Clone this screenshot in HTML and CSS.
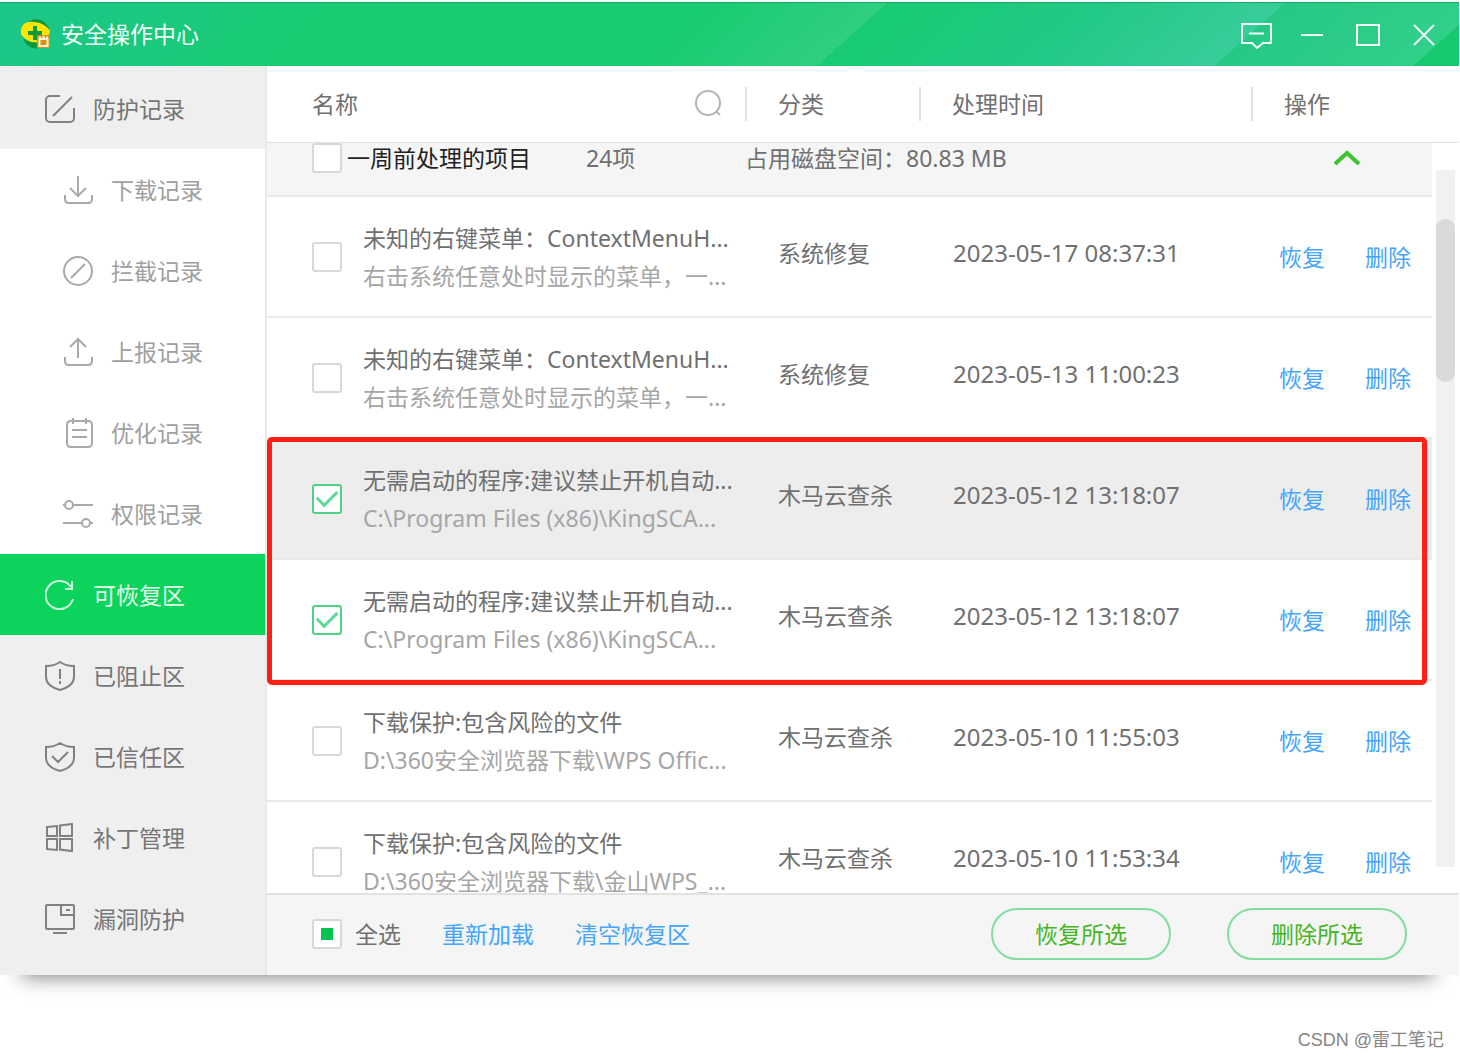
FILE: index.html
```html
<!DOCTYPE html>
<html lang="zh-CN">
<head>
<meta charset="utf-8">
<title>安全操作中心</title>
<link rel="stylesheet" href="styles.css">
</head>
<body>
<div class="window">
  <header class="titlebar">
    <svg class="logo" viewBox="0 0 30 30" aria-hidden="true">
      <path d="M7 4C14-3 26 0 29 10l-4 4C22 6 14 3 7 4z" fill="#0a9a3c"/>
      <path d="M1 15C0 6 6 2 13 3c8 0 14 4 17 9l-2 7-8 6C12 24 3 20 1 15z" fill="#ffe600"/>
      <path d="M3 19c4 4 9 5 17 4v6C12 31 5 26 3 19z" fill="#0a9a3c"/>
      <path d="M15 7v14M8 14h14" stroke="#0a9a3c" stroke-width="4"/>
      <path d="M17 16h13v13H17z" fill="#d9920f"/>
      <path d="M19.500 20h8v7h-8zM20 17.500v3M23.500 17v3M27 17.500v3" fill="none" stroke="#fff6dc" stroke-width="2"/>
    </svg>
    <h1 class="title">安全操作中心</h1>
    <div class="controls">
      <button type="button" aria-label="反馈"><svg class="icon" viewBox="0 0 32 32"><path d="M2 6h29v19h-8l-6 5-5-5H2zM9 15.500h15"/></svg></button>
      <button type="button" aria-label="最小化"><svg class="icon" viewBox="0 0 32 32"><path d="M5 17h22"/></svg></button>
      <button type="button" aria-label="最大化"><svg class="icon" viewBox="0 0 32 32"><path d="M5 7h22v20H5z"/></svg></button>
      <button type="button" aria-label="关闭"><svg class="icon" viewBox="0 0 32 32"><path d="M6 7l20 20M26 7l-20 20"/></svg></button>
    </div>
  </header>
  <div class="content">
    <nav class="sidebar">
      <a class="item" href="#protect"><svg class="icon" viewBox="0 0 30 30"><path d="M15 2H5a4 4 0 0 0-4 4v18a4 4 0 0 0 4 4h20a4 4 0 0 0 4-4V14M8 22L27 3"/></svg>防护记录</a>
      <div class="sub">
        <a class="item" href="#download"><svg class="icon" viewBox="0 0 30 30"><path d="M2 20v4q0 4 4 4h19q4 0 4-4v-4M15 1v20M7 13l8 8 8-8"/></svg>下载记录</a>
        <a class="item" href="#block"><svg class="icon" viewBox="0 0 30 30"><circle cx="15" cy="15" r="14"/><path d="M8 22L22 8"/></svg>拦截记录</a>
        <a class="item" href="#report"><svg class="icon" viewBox="0 0 30 30"><path d="M2 20v4q0 4 4 4h19q4 0 4-4v-4M15 21V2M7 10l8-8 8 8"/></svg>上报记录</a>
        <a class="item" href="#optimize"><svg class="icon" viewBox="0 0 30 30"><path d="M8 3h17q4 0 4 4v18q0 4-4 4H8q-4 0-4-4V7q0-4 4-4M10 0v6M23 0v6M9 12h15M9 19h15"/></svg>优化记录</a>
        <a class="item" href="#permission"><svg class="icon" viewBox="0 0 30 30"><circle cx="6" cy="6" r="4"/><circle cx="23" cy="24" r="4"/><path d="M10 6h20M0 6h2M0 24h19M27 24h3"/></svg>权限记录</a>
      </div>
      <a class="item active" href="#restore" aria-current="page"><svg class="icon" viewBox="0 0 30 30"><path d="M28 19A14 14 0 1 1 26 7M27 1v8h-7"/></svg>可恢复区</a>
      <a class="item" href="#blocked"><svg class="icon" viewBox="0 0 30 30"><path d="M15 1q6 4 14 4v11c0 7-7 11-14 13C8 27 1 23 1 16V5q8 0 14-4zM15 8v10M15 20v3"/></svg>已阻止区</a>
      <a class="item" href="#trusted"><svg class="icon" viewBox="0 0 30 30"><path d="M15 1q6 4 14 4v11c0 7-7 11-14 13C8 27 1 23 1 16V5q8 0 14-4zM7 14l6 6 10-10"/></svg>已信任区</a>
      <a class="item" href="#patch"><svg class="icon" viewBox="0 0 30 30"><path d="M2 4l10-1v10H2zM15 2.500L27 1v12H15zM2 16h10v11L2 26zM15 16h12v12l-12-1.500z"/></svg>补丁管理</a>
      <a class="item" href="#leak"><svg class="icon" viewBox="0 0 30 30"><path d="M2 1h26q1 0 1 1v22q0 1-1 1H2q-1 0-1-1V2q0-1 1-1zM16 1v10h13M21 6h4M8 29h14"/></svg>漏洞防护</a>
    </nav>
    <main class="main">
      <div class="list">
        <table class="records">
          <colgroup><col><col class="col-type"><col class="col-time"><col class="col-ops"><col class="col-gutter"></colgroup>
          <thead>
            <tr>
              <th scope="col"><div class="head name-head">名称<button type="button" class="search" aria-label="搜索"><svg class="icon" viewBox="0 0 28 28"><circle cx="14" cy="13" r="12"/><path d="M22 21l4 4"/></svg></button></div></th>
              <th scope="col"><div class="head">分类</div></th>
              <th scope="col"><div class="head">处理时间</div></th>
              <th scope="col"><div class="head">操作</div></th>
              <td></td>
            </tr>
          </thead>
          <tbody>
            <tr class="group">
              <td><div class="group-name"><input type="checkbox" id="g1"><label for="g1">一周前处理的项目</label><span>24项</span></div></td>
              <td colspan="2">占用磁盘空间：80.83 MB</td>
              <td><button type="button" class="fold" aria-label="收起"><svg class="icon" viewBox="0 0 28 18"><path d="M2 15L14 4l12 11"/></svg></button></td>
              <td></td>
            </tr>
            <tr>
              <td><div class="entry"><input type="checkbox" id="r1"><label for="r1">未知的右键菜单：ContextMenuH...<small>右击系统任意处时显示的菜单，一...</small></label></div></td>
              <td class="type">系统修复</td><td class="time">2023-05-17 08:37:31</td>
              <td class="ops"><a href="#r1">恢复</a><a href="#d1">删除</a></td><td></td>
            </tr>
            <tr>
              <td><div class="entry"><input type="checkbox" id="r2"><label for="r2">未知的右键菜单：ContextMenuH...<small>右击系统任意处时显示的菜单，一...</small></label></div></td>
              <td class="type">系统修复</td><td class="time">2023-05-13 11:00:23</td>
              <td class="ops"><a href="#r2">恢复</a><a href="#d2">删除</a></td><td></td>
            </tr>
            <tr class="hover">
              <td><div class="entry"><input type="checkbox" id="r3" checked><label for="r3">无需启动的程序:建议禁止开机自动...<small>C:\Program Files (x86)\KingSCA...</small></label></div></td>
              <td class="type">木马云查杀</td><td class="time">2023-05-12 13:18:07</td>
              <td class="ops"><a href="#r3">恢复</a><a href="#d3">删除</a></td><td></td>
            </tr>
            <tr>
              <td><div class="entry"><input type="checkbox" id="r4" checked><label for="r4">无需启动的程序:建议禁止开机自动...<small>C:\Program Files (x86)\KingSCA...</small></label></div></td>
              <td class="type">木马云查杀</td><td class="time">2023-05-12 13:18:07</td>
              <td class="ops"><a href="#r4">恢复</a><a href="#d4">删除</a></td><td></td>
            </tr>
            <tr>
              <td><div class="entry"><input type="checkbox" id="r5"><label for="r5">下载保护:包含风险的文件<small>D:\360安全浏览器下载\WPS Offic...</small></label></div></td>
              <td class="type">木马云查杀</td><td class="time">2023-05-10 11:55:03</td>
              <td class="ops"><a href="#r5">恢复</a><a href="#d5">删除</a></td><td></td>
            </tr>
            <tr>
              <td><div class="entry"><input type="checkbox" id="r6"><label for="r6">下载保护:包含风险的文件<small>D:\360安全浏览器下载\金山WPS_...</small></label></div></td>
              <td class="type">木马云查杀</td><td class="time">2023-05-10 11:53:34</td>
              <td class="ops"><a href="#r6">恢复</a><a href="#d6">删除</a></td><td></td>
            </tr>
          </tbody>
        </table>
        <div class="highlight"></div>
        <div class="scrollbar"><div class="thumb"></div></div>
      </div>
      <footer class="actions">
        <input type="checkbox" id="all" class="partial"><label for="all">全选</label>
        <a href="#reload">重新加载</a>
        <a href="#clear">清空恢复区</a>
        <div class="buttons">
          <button type="button">恢复所选</button>
          <button type="button">删除所选</button>
        </div>
      </footer>
    </main>
  </div>
</div>
<p class="credit">CSDN @雷工笔记</p>
</body>
</html>
```
FILE: styles.css
```css
* { box-sizing: border-box; }

body {
  margin: 0;
  padding: 2px 1px 0 0;
  height: 100vh;
  display: flex;
  flex-direction: column;
  background: #fff;
  color: #707070;
  font: 23px/38px "Noto Sans", "Noto Sans CJK SC", sans-serif;
}

a { color: #45a5fb; text-decoration: none; }
button { padding: 0; border: 0; background: none; color: inherit; font: inherit; }
.icon { display: block; flex: none; width: 30px; height: 30px; fill: none; stroke: currentColor; stroke-width: 2; }

.window {
  position: relative;
  flex: 1;
  min-height: 0;
  display: flex;
  flex-direction: column;
}
.window::after {
  content: "";
  position: absolute;
  z-index: -1;
  left: 24px;
  right: 28px;
  bottom: 4px;
  height: 20px;
  box-shadow: 0 4px 20px 2px rgba(0, 0, 0, .5);
}

.titlebar {
  flex: none;
  display: flex;
  align-items: center;
  height: 64px;
  padding: 0 19px 2px 20px;
  border-top: 1px solid #16a866;
  color: #f2fff8;
  background: linear-gradient(138deg,
    #1dc68c, #18cb72 22%, #18cb72 46%,
    #30cf80 58%, #18cb72 58%, #22c986 72%,
    #38cd9a 84%, #25c985 84%, #30d089 97%, #16c96f 97%);
}
.logo { width: 30px; height: 30px; margin-right: 11px; }
.title { margin: 0; font-size: 23px; font-weight: 400; }
.controls { display: flex; gap: 24px; margin-left: auto; }
.controls .icon { width: 32px; height: 32px; }

.content { flex: 1; min-height: 0; display: flex; }

.sidebar {
  flex: none;
  width: 267px;
  padding-top: 2px;
  border-right: 2px solid #e9e9e9;
  background: #efefef;
}
.item {
  display: flex;
  align-items: center;
  gap: 18px;
  height: 81px;
  padding-left: 45px;
  color: #767676;
}
.item .icon { opacity: .9; }
.item.active { background: #0bd35c; color: #e4ffed; }
.sub { background: #fff; }
.sub .item { padding-left: 63px; color: #a0a0a0; }

.main { flex: 1; min-width: 0; display: flex; flex-direction: column; }
.list { position: relative; flex: 1; min-height: 0; overflow: hidden; }

.records { width: 100%; table-layout: fixed; border-spacing: 0; white-space: nowrap; }
.records th, .records td { padding: 0; text-align: left; font-weight: 400; }
.col-type { width: 174px; }
.col-time { width: 332px; }
.col-ops { width: 181px; }
.col-gutter { width: 27px; }

.records thead th, .records thead td { height: 77px; border-bottom: 1px solid #e2e2e2; }
.head { display: flex; align-items: center; height: 34px; padding-left: 31px; border-left: 2px solid #e2e2e2; }
.name-head { padding: 0 23px 0 45px; border-left: 0; }
.search { margin-left: auto; color: #b5b5b5; }
.search .icon { width: 28px; height: 28px; }

.records tbody td { height: 121px; border-bottom: 2px solid #e9e9e9; }
.records tbody td:last-child { border: 0; background: none; }
.records .group td { height: 54px; padding-bottom: 22px; background: #f5f5f5; line-height: 30px; }
.group-name { display: flex; align-items: center; height: 30px; padding-left: 45px; }
.group-name label { margin-left: 5px; color: #222; }
.group-name span { margin-left: 55px; }
.fold { display: block; margin-left: 82px; color: #3bc430; }
.fold .icon { width: 28px; height: 18px; stroke-width: 4; }

.hover td { background: #ededed; }
.entry { display: flex; align-items: center; gap: 21px; padding-left: 45px; }
.entry small { display: block; color: #a6a6a6; font-size: 23px; }
.records .type { padding: 0 0 8px 33px; }
.records .time { padding: 0 0 8px 34px; font-size: 24px; }
.ops a { margin-left: 28px; }
.ops a + a { margin-left: 40px; }

input[type="checkbox"] {
  appearance: none;
  flex: none;
  display: grid;
  place-items: center;
  width: 30px;
  height: 30px;
  margin: 0;
  border: 2px solid #d8d8d8;
  border-radius: 3px;
  background: #fff;
}
input[type="checkbox"]:checked { border-color: #4fd18a; }
input[type="checkbox"]:checked::before {
  content: "";
  width: 17px;
  height: 9px;
  margin-bottom: 6px;
  border: solid #5fd795;
  border-width: 0 0 3px 3px;
  rotate: -45deg;
}
input.partial::before { content: ""; width: 12px; height: 12px; background: #07c251; }

.highlight {
  position: absolute;
  top: 371px;
  left: 0;
  right: 32px;
  height: 248px;
  border: 5px solid #ff2013;
  border-radius: 5px;
}
.scrollbar {
  position: absolute;
  top: 104px;
  right: 4px;
  bottom: 26px;
  width: 19px;
  padding-top: 49px;
  background: #f1f1f1;
}
.thumb { height: 163px; border-radius: 9px; background: #dadada; }

.actions {
  flex: none;
  display: flex;
  align-items: center;
  height: 82px;
  padding: 0 52px 2px 45px;
  border-top: 2px solid #e2e2e2;
  background: #f5f5f5;
}
.actions label { margin-left: 13px; }
.actions a { margin-left: 41px; }
.buttons { display: flex; gap: 56px; margin-left: auto; }
.buttons button {
  width: 180px;
  height: 52px;
  border: 2px solid #83dda0;
  border-radius: 26px;
  color: #44b51c;
}

.credit {
  flex: none;
  height: 84px;
  margin: 0;
  padding: 46px 15px 0 0;
  color: #858585;
  font-family: "Liberation Sans", "Noto Sans CJK SC", sans-serif;
  font-size: 18px;
  text-align: right;
}
```
